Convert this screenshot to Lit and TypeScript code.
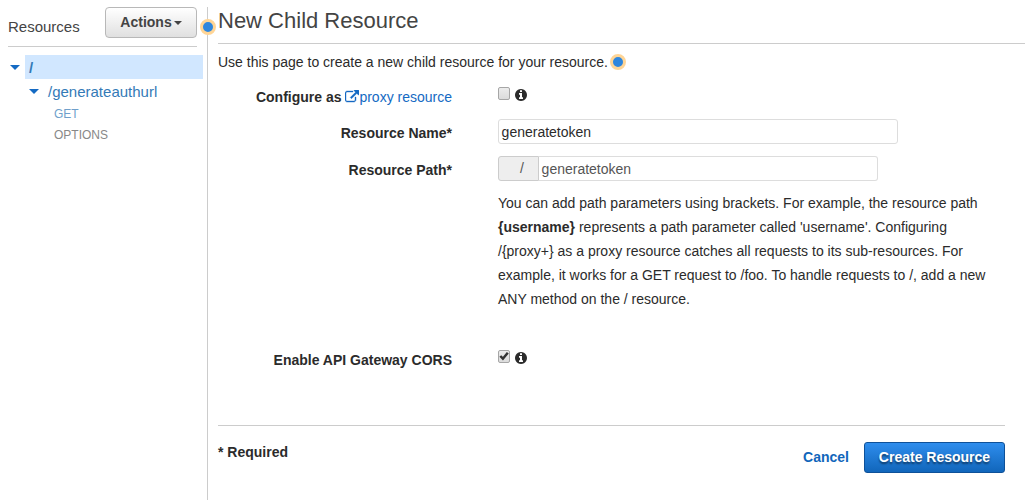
import { LitElement, html, css } from "lit";
import { customElement, property } from "lit/decorators.js";

@customElement("info-icon")
class InfoIcon extends LitElement {
  static styles = css`
    :host { display: block; width: 12px; height: 12px; color: #2b2b2b; }
    .glyph { display: block; width: 12px; height: 12px; fill: currentColor; }
  `;
  render() {
    return html`<svg class="glyph" viewBox="0 128 1536 1536"><path d="M1024 1376v-160q0-14-9-23t-23-9h-96v-512q0-14-9-23t-23-9h-320q-14 0-23 9t-9 23v160q0 14 9 23t23 9h96v320h-96q-14 0-23 9t-9 23v160q0 14 9 23t23 9h448q14 0 23-9t9-23zm-128-896v-160q0-14-9-23t-23-9h-192q-14 0-23 9t-9 23v160q0 14 9 23t23 9h192q14 0 23-9t9-23zm640 416q0 209-103 385.5t-279.5 279.5-385.5 103-385.5-103-279.5-279.5-103-385.5 103-385.5 279.5-279.5 385.5-103 385.5 103 279.5 279.5 103 385.5z"/></svg>`;
  }
}

@customElement("check-box")
class CheckBox extends LitElement {
  @property({ type: Boolean }) checked = false;
  static styles = css`
    :host { display: block; width: 12px; height: 12px; }
    .box {
      box-sizing: border-box; width: 12px; height: 13px;
      border: 1px solid #a6a6a6; border-radius: 2px;
      background: linear-gradient(#ececec, #dcdcdc);
    }
    .tick { display: block; width: 10px; height: 10px; }
  `;
  render() {
    return html`<div class="box">
      ${this.checked
        ? html`<svg class="tick" viewBox="0 0 10 10"><path d="M1.3 5 3.9 7.7 8.8 1.8" fill="none" stroke="#333" stroke-width="2.5"/></svg>`
        : null}
    </div>`;
  }
}

@customElement("app-root")
class AppRoot extends LitElement {
  static styles = css`
    :host {
      display: flex; height: 500px; width: 1032px; box-sizing: border-box;
      overflow: hidden; padding-top: 7px; background: #fff; color: #2b2b2b;
      font: 14px/24px "Liberation Sans", Arial, sans-serif;
    }
    .sidebar { width: 207px; flex: none; border-right: 1px solid #ccc; }
    .side-head {
      display: flex; justify-content: space-between; height: 39px;
      margin: 0 10px 0 8px; border-bottom: 1px solid #ccc;
    }
    .side-title { font-size: 15px; line-height: 40px; color: #444; }
    .actions {
      display: flex; align-items: center; justify-content: center; gap: 2px;
      box-sizing: border-box; width: 92px; height: 31px; padding-bottom: 1px;
      border: 1px solid #b8b8b8; border-radius: 4px;
      background: linear-gradient(#fff, #e0e0e0);
      font-weight: bold; color: #444;
    }
    .caret { display: block; width: 8px; height: 4px; margin-top: 2px; fill: #444; }
    .tree { padding-top: 8px; }
    .node { display: flex; align-items: center; font-size: 15px; line-height: 26px; height: 24px; color: #337ab7; }
    .arrow { display: block; width: 10px; height: 5px; margin-top: 1px; fill: #146ac3; flex: none; }
    .root { padding-left: 10px; gap: 5px; }
    .root-name {
      width: 174px; height: 24px; padding-left: 4px; background: #d1e7ff;
      font-weight: bold;
    }
    .child { padding-left: 29px; gap: 9px; }
    .child-name { height: 24px; }
    .methods { padding-top: 1px; }
    .method { padding-left: 54px; font-size: 12px; line-height: 21px; color: #888; }
    .get { color: #6f9fcb; }
    .main { flex: none; width: 807px; padding-left: 10px; }
    .head {
      position: relative; box-sizing: border-box; height: 37px; border-bottom: 1px solid #ccc;
      font-size: 22px; line-height: 28px; color: #444;
    }
    .dot {
      display: block; box-sizing: border-box; width: 16px; height: 16px;
      border: 3px solid #ffd596; border-radius: 50%; background: #2e86de;
    }
    .head-dot { position: absolute; left: -18px; top: 12px; }
    .content { width: 787px; }
    .intro { display: flex; align-items: center; gap: 2px; height: 24px; margin-top: 6px; }
    .row { display: grid; grid-template-columns: 234px 1fr; column-gap: 46px; }
    .label { text-align: right; font-weight: bold; }
    .link { color: #146ac3; font-weight: normal; }
    .ext { width: 14px; height: 14px; fill: #146ac3; stroke: #146ac3; stroke-width: 50; vertical-align: -2px; }
    .proxy { margin-top: 11px; }
    .checks { display: flex; gap: 5px; padding-top: 2px; }
    .info { margin-top: 2px; }
    .name { margin-top: 10px; height: 25px; }
    .name .label, .path .label { padding-top: 2px; }
    .input {
      box-sizing: border-box; width: 400px; height: 25px; padding-left: 2.6px;
      border: 1px solid #ddd; border-radius: 3px; background: #fff;
    }
    .path { margin-top: 12px; }
    .group { display: flex; width: 380px; height: 25px; }
    .addon {
      box-sizing: border-box; width: 41px; padding-left: 21px; line-height: 22px;
      border: 1px solid #ccc; border-radius: 3px 0 0 3px; background: #eee; color: #555;
    }
    .suffix { flex: 1; width: auto; border-left: 0; border-radius: 0 3px 3px 0; color: #555; }
    .help { margin: 10px 0 0; width: 500px; }
    .cors { margin-top: 37px; }
    .footer {
      display: flex; justify-content: space-between; margin-top: 53px;
      border-top: 1px solid #ccc; padding-top: 16px;
    }
    .required { font-weight: bold; line-height: 20px; }
    .buttons { display: flex; align-items: center; gap: 15px; font-weight: bold; }
    .cancel { color: #1166bb; padding-bottom: 2px; }
    .create {
      box-sizing: border-box; width: 141px; height: 31px; line-height: 29px;
      text-align: center; color: #fff; border: 1px solid #0e5199; border-radius: 3px;
      background: linear-gradient(#2e8ded, #1166bb);
      text-shadow: 0 2px 2px rgba(0, 0, 0, 0.5);
    }
  `;

  arrow() {
    return html`<svg class="arrow" viewBox="0 0 10 5"><path d="M0 0H10L5 5z"/></svg>`;
  }

  render() {
    return html`
      <nav class="sidebar">
        <div class="side-head">
          <span class="side-title">Resources</span>
          <div class="actions">Actions<svg class="caret" viewBox="0 0 8 4"><path d="M0 0H8L4 4z"/></svg></div>
        </div>
        <div class="tree">
          <div class="node root">${this.arrow()}<span class="root-name">/</span></div>
          <div class="node child">${this.arrow()}<span class="child-name">/generateauthurl</span></div>
          <div class="methods">
            <div class="method get">GET</div>
            <div class="method">OPTIONS</div>
          </div>
        </div>
      </nav>
      <main class="main">
        <div class="head"><span class="dot head-dot"></span>New Child Resource</div>
        <div class="content">
          <div class="intro">Use this page to create a new child resource for your resource. <span class="dot"></span></div>
          <div class="row proxy">
            <div class="label">Configure as <span class="link"><svg class="ext" viewBox="0 0 1792 1792"><path d="M1408 928v320q0 119-84.5 203.5t-203.5 84.5h-832q-119 0-203.5-84.5t-84.5-203.5v-832q0-119 84.5-203.5t203.5-84.5h704q14 0 23 9t9 23v64q0 14-9 23t-23 9h-704q-66 0-113 47t-47 113v832q0 66 47 113t113 47h832q66 0 113-47t47-113v-320q0-14 9-23t23-9h64q14 0 23 9t9 23zm384-864v512q0 26-19 45t-45 19-45-19l-176-176-652 652q-10 10-23 10t-23-10l-114-114q-10-10-10-23t10-23l652-652-176-176q-19-19-19-45t19-45 45-19h512q26 0 45 19t19 45z"/></svg>proxy resource</span></div>
            <div class="checks"><check-box></check-box><info-icon class="info"></info-icon></div>
          </div>
          <div class="row name">
            <div class="label">Resource Name*</div>
            <div class="input">generatetoken</div>
          </div>
          <div class="row path">
            <div class="label">Resource Path*</div>
            <div>
              <div class="group"><div class="addon">/</div><div class="input suffix">generatetoken</div></div>
              <p class="help">You can add path parameters using brackets. For example, the resource path <b>{username}</b> represents a path parameter called 'username'. Configuring /{proxy+} as a proxy resource catches all requests to its sub-resources. For example, it works for a GET request to /foo. To handle requests to /, add a new ANY method on the / resource.</p>
            </div>
          </div>
          <div class="row cors">
            <div class="label">Enable API Gateway CORS</div>
            <div class="checks"><check-box checked></check-box><info-icon class="info"></info-icon></div>
          </div>
          <div class="footer">
            <span class="required">* Required</span>
            <div class="buttons"><span class="cancel">Cancel</span><div class="create">Create Resource</div></div>
          </div>
        </div>
      </main>
    `;
  }
}
